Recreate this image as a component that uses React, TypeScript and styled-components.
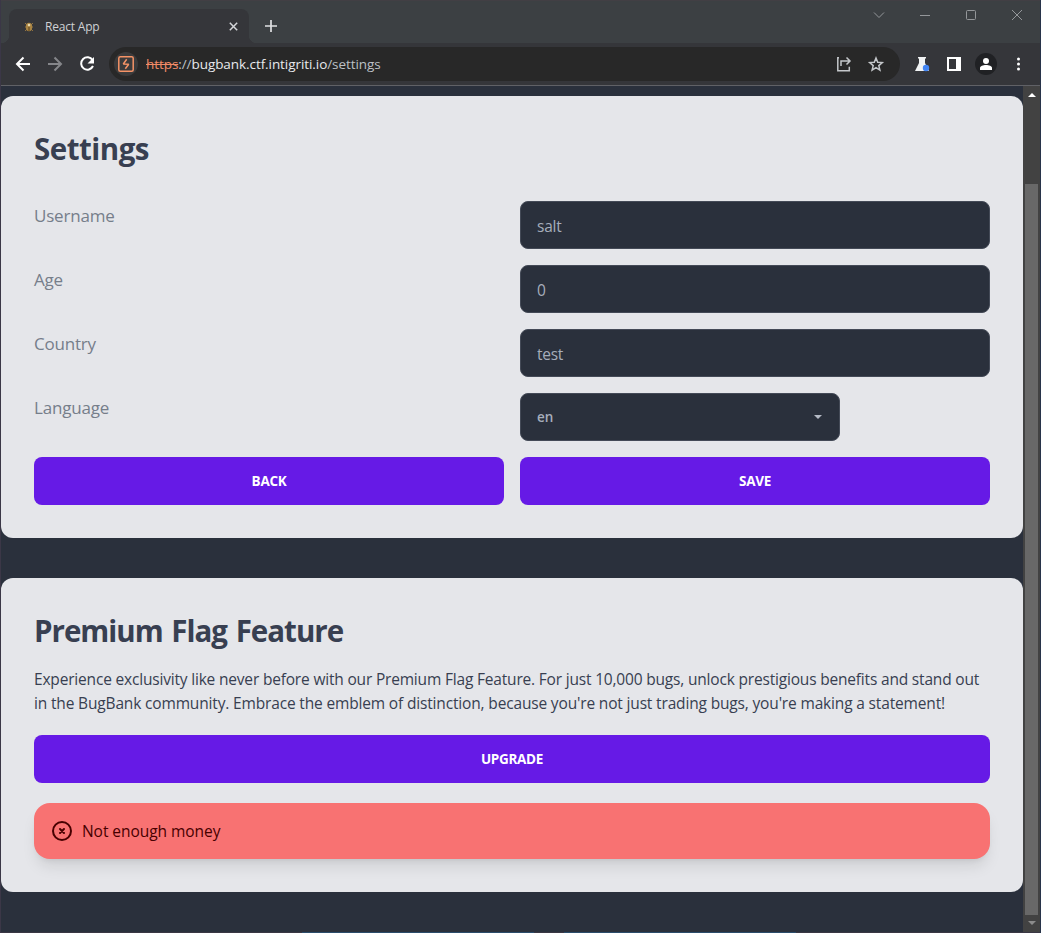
import React from 'react';
import styled, { createGlobalStyle } from 'styled-components';

const GlobalStyle = createGlobalStyle`
  * { box-sizing: border-box; }
  body { margin: 0; background: #2a303c; overflow: hidden; }
  button, input { font: inherit; }
`;

const Window = styled.div`
  width: 1041px;
  height: 933px;
  display: flex;
  flex-direction: column;
  overflow: hidden;
  border-left: 1px solid #3b3747;
  border-right: 1px solid #28344a;
  background: #2a303c;
  font-family: 'Open Sans', 'Noto Sans', sans-serif;
`;

const TabStrip = styled.header`
  height: 43px;
  flex: none;
  display: flex;
  align-items: flex-end;
  padding-left: 8px;
  background: #3c4043;
  border-top: 1px solid #423f44;
`;

const Tab = styled.div`
  position: relative;
  width: 240px;
  height: 34px;
  display: flex;
  align-items: center;
  padding: 1px 10px 0 15px;
  border-radius: 8px 8px 0 0;
  background: #35363a;
  &::before, &::after {
    content: '';
    position: absolute;
    bottom: 0;
    width: 8px;
    height: 8px;
  }
  &::before { left: -8px; background: radial-gradient(circle at 0 0, #3c4043 8px, #35363a 8.5px); }
  &::after { right: -8px; background: radial-gradient(circle at 100% 0, #3c4043 8px, #35363a 8.5px); }
`;

const TabTitle = styled.span`
  flex: 1;
  margin-left: 11px;
  padding-top: 1px;
  font-size: 12px;
  line-height: 16px;
  letter-spacing: -0.2px;
  color: #cfd1d4;
`;

const Icon = styled.svg`
  display: block;
  flex: none;
  overflow: visible;
`;

const NewTab = styled.div`
  margin: 0 0 11px 16px;
`;

const WindowControls = styled.div`
  display: flex;
  gap: 34px;
  margin-left: auto;
  padding: 0 17px 22px 0;
`;

const Toolbar = styled.nav`
  height: 43px;
  flex: none;
  display: flex;
  align-items: center;
  padding: 0 9px 0 10px;
  background: #35363a;
  border-bottom: 1px solid #606166;
`;

const NavButtons = styled.div`
  display: flex;
  gap: 8px;
  width: 98px;
`;

const Omnibox = styled.div`
  width: 791px;
  height: 34px;
  display: flex;
  align-items: center;
  padding: 0 14px 0 5px;
  border-radius: 17px;
  background: #282828;
`;

const SiteBadge = styled.div`
  width: 24px;
  height: 24px;
  display: grid;
  place-items: center;
  border-radius: 50%;
  background: #3b3b3c;
`;

const Url = styled.span`
  flex: 1;
  margin-left: 8px;
  font-size: 13.5px;
  line-height: 20px;
  letter-spacing: -0.07px;
  color: #bdc1c6;
  white-space: nowrap;
`;
const Scheme = styled.span`
  color: #f28b67;
  text-decoration: line-through;
`;
const Host = styled.span`
  color: #e8eaed;
`;

const BoxActions = styled.div`
  display: flex;
  gap: 12px;
`;

const Extensions = styled.div`
  display: flex;
  align-items: center;
  gap: 8px;
  margin-left: 10px;
`;

const Avatar = styled.div`
  width: 22px;
  height: 22px;
  margin: 0 1px;
  display: grid;
  place-items: center;
  border-radius: 50%;
  background: #202124;
`;

const Viewport = styled.div`
  flex: 1;
  min-height: 0;
  display: flex;
`;

const Page = styled.main`
  width: 1022px;
  display: flex;
  flex-direction: column;
  gap: 40px;
  padding-top: 10px;
`;

const Card = styled.section<{ $height: number }>`
  height: ${(p) => p.$height}px;
  flex: none;
  padding: 33px;
  border-radius: 12px;
  background: #e5e6ea;
  color: #383f51;
`;

const Heading = styled.h1<{ $spacing: number }>`
  margin: 0;
  height: 40px;
  font-size: 29.5px;
  font-weight: 700;
  line-height: 39px;
  letter-spacing: ${(p) => p.$spacing}px;
  word-spacing: 2px;
  color: #383f51;
`;

const Form = styled.div`
  display: grid;
  grid-template-columns: 1fr 1fr;
  gap: 16px;
  margin-top: 32px;
`;

const Label = styled.label`
  height: 48px;
  font-size: 17px;
  font-weight: 400;
  line-height: 29px;
  letter-spacing: -0.2px;
  color: #767e8a;
`;

const Input = styled.input`
  width: 100%;
  height: 48px;
  padding: 2px 16px 0;
  border: 1px solid #444a57;
  border-radius: 8px;
  outline: 0;
  background: #2a303c;
  font-size: 15.5px;
  letter-spacing: -0.25px;
  color: #a6adbb;
`;

const Select = styled.div`
  width: 320px;
  height: 48px;
  display: flex;
  align-items: center;
  justify-content: space-between;
  padding: 0 17px 0 16px;
  border: 1px solid #444a57;
  border-radius: 8px;
  background: #2a303c;
  font-size: 13.5px;
  font-weight: 600;
  color: #a6adbb;
`;

const Button = styled.button<{ $wide?: boolean }>`
  width: 100%;
  height: 48px;
  padding: 0;
  margin-top: ${(p) => (p.$wide ? 20 : 0)}px;
  border: 0;
  border-radius: 8px;
  background: #661ae6;
  color: #fff;
  font-size: 13.5px;
  font-weight: 700;
  letter-spacing: -0.3px;
`;

const Copy = styled.p<{ $first?: boolean; $spacing: number }>`
  margin: ${(p) => (p.$first ? 16 : 0)}px 0 0;
  font-size: 15.5px;
  line-height: 24px;
  letter-spacing: ${(p) => p.$spacing}px;
  white-space: nowrap;
  color: #383f51;
`;

const Alert = styled.div`
  height: 56px;
  display: flex;
  align-items: center;
  gap: 8px;
  margin-top: 20px;
  padding: 0 16px;
  border-radius: 16px;
  background: #f87272;
  box-shadow: 0 10px 15px -3px rgba(0, 0, 0, 0.1), 0 4px 6px -4px rgba(0, 0, 0, 0.1);
  font-size: 15.5px;
  letter-spacing: -0.05px;
  color: #470000;
`;

const Scrollbar = styled.div`
  width: 17px;
  display: flex;
  flex-direction: column;
  align-items: center;
  padding: 7px 2px 0 2px;
  background: #424242;
`;
const Thumb = styled.div`
  width: 13px;
  height: 731px;
  flex: none;
  margin: 87px 0 6px;
  background: #686868;
`;

const BottomEdge = styled.footer`
  height: 1px;
  flex: none;
  display: flex;
  gap: 30px;
  padding-left: 301px;
  background: #3a3744;
`;
const EdgeSegment = styled.span`
  width: 232px;
  background: #2b4d6c;
`;

export default function App() {
  return (
    <>
      <GlobalStyle />
      <Window>
        <TabStrip>
          <Tab>
            <Icon width="10" height="12" viewBox="0 0 10 12">
              <path d="M1 2l2 2M9 2L7 4M1 6h2M9 6H7M1 10l2-2M9 10L7 8" stroke="#8f7343" />
              <ellipse cx="5" cy="6" rx="3.2" ry="4.2" fill="#a98443" />
              <circle cx="5" cy="4" r="1.3" fill="#e9d9ad" />
              <path d="M5 6v4" stroke="#59401c" />
            </Icon>
            <TabTitle>React App</TabTitle>
            <Icon width="10" height="10" viewBox="0 0 10 10" stroke="#d5d7da" strokeWidth="1.5">
              <path d="M.8.8l7.400 7.400M8.200.8L.8 8.200" />
            </Icon>
          </Tab>
          <NewTab>
            <Icon width="12" height="12" viewBox="0 0 12 12" stroke="#e0e1e3" strokeWidth="1.7">
              <path d="M6 0v12M0 6h12" />
            </Icon>
          </NewTab>
          <WindowControls>
            <Icon width="12" height="12" viewBox="0 0 12 12" fill="none" stroke="#94979a"><path d="M1 3.5l5 5 5-5" /></Icon>
            <Icon width="12" height="12" viewBox="0 0 12 12" fill="none" stroke="#94979a"><path d="M1 6.5h10" /></Icon>
            <Icon width="12" height="12" viewBox="0 0 12 12" fill="none" stroke="#94979a"><rect x="1.5" y="1.5" width="9" height="9" rx="1" /></Icon>
            <Icon width="12" height="12" viewBox="0 0 12 12" fill="none" stroke="#94979a"><path d="M1 1l10 10M11 1L1 11" /></Icon>
          </WindowControls>
        </TabStrip>
        <Toolbar>
          <NavButtons>
            <Icon width="24" height="24" viewBox="0 0 24 24" fill="none" stroke="#fff" strokeWidth="2"><path d="M19 12H6M12.5 5.5L6 12l6.5 6.5" /></Icon>
            <Icon width="24" height="24" viewBox="0 0 24 24" fill="none" stroke="#85868a" strokeWidth="2"><path d="M5 12h13M11.5 5.5L18 12l-6.5 6.5" /></Icon>
            <Icon width="24" height="24" viewBox="0 0 24 24" fill="none" stroke="#fff" strokeWidth="2">
              <path d="M17.6 8.1A6.2 6.2 0 1 0 18 14" />
              <path d="M19 5v6.5h-6.5z" fill="#fff" stroke="none" />
            </Icon>
          </NavButtons>
          <Omnibox>
            <SiteBadge>
              <Icon width="16" height="16" viewBox="0 0 16 16" fill="none" stroke="#f59366">
                <rect x=".8" y=".8" width="14.4" height="14.4" rx="1.5" strokeWidth="1.5" />
                <path d="M8.7 3.3L5.3 8 10.7 8.3 7.3 12.7" strokeWidth="1.5" strokeLinejoin="bevel" />
              </Icon>
            </SiteBadge>
            <Url><Scheme>https</Scheme>://<Host>bugbank.ctf.intigriti.io</Host>/settings</Url>
            <BoxActions>
              <Icon width="20" height="20" viewBox="0 0 20 20" fill="none" stroke="#c4c7ca" strokeWidth="1.5">
                <path d="M5 3.8H3.8v13h11.5v-4M7 12V7h9M12.5 3.5L16 7l-3.5 3.5" />
              </Icon>
              <Icon width="20" height="20" viewBox="0 0 20 20" fill="none" stroke="#c4c7ca" strokeWidth="1.5">
                <path d="M10 4l1.7 4.2 4.6.4-3.500 3 1.100 4.500-3.900-2.400-3.900 2.400 1.100-4.500-3.500-3 4.600-.4z" />
              </Icon>
            </BoxActions>
          </Omnibox>
          <Extensions>
            <Icon width="24" height="24" viewBox="0 0 24 24">
              <path d="M8 5h8v1.500h-1V11l4 8H5l4-8V6.500H8z" fill="#f1f3f4" />
              <circle cx="16" cy="16" r="3.200" fill="#4285f4" />
            </Icon>
            <Icon width="24" height="24" viewBox="0 0 24 24">
              <path d="M5 5h14v14H5zM7 7v10h7V7z" fill="#fff" fillRule="evenodd" />
            </Icon>
            <Avatar>
              <Icon width="12" height="12" viewBox="0 0 12 12" fill="#fff"><circle cx="6" cy="3" r="3" /><path d="M0 12v-2c0-2 3-3 6-3s6 1 6 3v2z" /></Icon>
            </Avatar>
            <Icon width="24" height="24" viewBox="0 0 24 24" fill="#fff">
              <circle cx="12.5" cy="7" r="1.5" /><circle cx="12.5" cy="12" r="1.5" /><circle cx="12.5" cy="17" r="1.5" />
            </Icon>
          </Extensions>
        </Toolbar>
        <Viewport>
          <Page>
            <Card $height={442}>
              <Heading $spacing={-0.5}>Settings</Heading>
              <Form>
                <Label>Username</Label>
                <Input defaultValue="salt" />
                <Label>Age</Label>
                <Input defaultValue="0" />
                <Label>Country</Label>
                <Input defaultValue="test" />
                <Label>Language</Label>
                <Select>
                  en
                  <Icon width="8" height="4" viewBox="0 0 8 4" fill="#b5bac5"><path d="M0 0h8L4 4z" /></Icon>
                </Select>
                <Button>BACK</Button>
                <Button>SAVE</Button>
              </Form>
            </Card>
            <Card $height={314}>
              <Heading $spacing={-1}>Premium Flag Feature</Heading>
              <Copy $first $spacing={-0.185}>Experience exclusivity like never before with our Premium Flag Feature. For just 10,000 bugs, unlock prestigious benefits and stand out</Copy>
              <Copy $spacing={-0.16}>in the BugBank community. Embrace the emblem of distinction, because you're not just trading bugs, you're making a statement!</Copy>
              <Button $wide>UPGRADE</Button>
              <Alert>
                <Icon width="24" height="24" viewBox="0 0 24 24" fill="none" stroke="#470000" strokeWidth="2">
                  <circle cx="12" cy="12" r="9" /><path d="M10 10l4 4M14 10l-4 4" strokeLinecap="round" />
                </Icon>
                Not enough money
              </Alert>
            </Card>
          </Page>
          <Scrollbar>
            <Icon width="8" height="4" viewBox="0 0 8 4" fill="#fff"><path d="M0 4h8L4 0z" /></Icon>
            <Thumb />
            <Icon width="8" height="4" viewBox="0 0 8 4" fill="#8b8b8b"><path d="M0 0h8L4 4z" /></Icon>
          </Scrollbar>
        </Viewport>
        <BottomEdge>
          <EdgeSegment />
          <EdgeSegment />
        </BottomEdge>
      </Window>
    </>
  );
}
